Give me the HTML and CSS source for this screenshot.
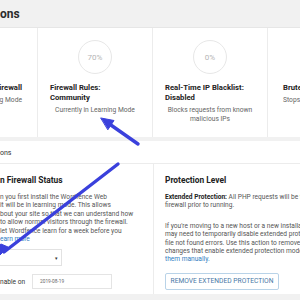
FILE: index.html
```html
<!DOCTYPE html>
<html>
<head>
<meta charset="utf-8">
<link rel="stylesheet" href="styles.css">
</head>
<body>
<div class="page">
  <header class="title-bar"><h1>ons</h1></header>

  <section class="status-cards">
    <div class="card card-first">
      <div class="ring ring-hidden"></div>
      <div class="card-title">Web Application Firewall</div>
      <div class="card-desc card-desc-right">Currently in Learning Mode</div>
    </div>
    <div class="card">
      <div class="ring">70%</div>
      <div class="card-title">Firewall Rules:<br>Community</div>
      <div class="card-desc">Currently in Learning Mode</div>
    </div>
    <div class="card">
      <div class="ring">0%</div>
      <div class="card-title">Real-Time IP Blacklist:<br>Disabled</div>
      <div class="card-desc">Blocks requests from known<br>malicious IPs</div>
    </div>
    <div class="card card-last">
      <div class="ring ring-hidden"></div>
      <div class="card-title">Brute Force Protection</div>
      <div class="card-desc card-desc-left">Stops password guessing</div>
    </div>
  </section>

  <section class="options">
    <div class="options-head">ons</div>
    <div class="options-body">
      <div class="col col-left">
        <h2 class="col-title">n Firewall Status</h2>
        <p class="text">n you first install the Wordfence Web<br>it will be in learning mode. This allows<br>bout your site so that we can understand how<br>to allow normal visitors through the firewall.<br>let Wordfence learn for a week before you<br><a class="link" href="#">earn more</a></p>
        <div class="select"><span class="caret">&#9662;</span></div>
        <div class="date-row">
          <span class="date-label">nable on</span>
          <span class="date-input">2019-08-19</span>
        </div>
      </div>
      <div class="col col-right">
        <h2 class="col-title">Protection Level</h2>
        <p class="text"><b>Extended Protection:</b> All PHP requests will be filtered by the<br>firewall prior to running.</p>
        <p class="text text-gap">If you're moving to a new host or a new installation, you<br>may need to temporarily disable extended protection to avoid<br>file not found errors. Use this action to remove the config<br>changes that enable extended protection mode or you can<br><a class="link" href="#">them manually.</a></p>
        <div class="button">REMOVE EXTENDED PROTECTION</div>
      </div>
    </div>
  </section>

  <svg class="arrows" width="300" height="300" viewBox="0 0 300 300">
    <g stroke="#3a40dc" stroke-width="3.4" stroke-linecap="round" fill="#3a40dc">
      <line x1="138" y1="144" x2="108" y2="123"/>
      <polygon points="101,118 114,120.5 108,129.5" stroke-width="1" stroke-linejoin="round"/>
      <line x1="118" y1="164" x2="4" y2="252"/>
      <polygon points="-4,259 8,247 1,244 -10,252" stroke-width="1" stroke-linejoin="round"/>
    </g>
  </svg>
</div>
</body>
</html>
```

FILE: styles.css
```css
html, body {
  margin: 0;
  padding: 0;
}
body {
  background: #f1f1f1;
  font-family: Roboto, "Liberation Sans", Arial, sans-serif;
  color: #333;
  overflow: hidden;
}
.page {
  position: relative;
  width: 300px;
  height: 300px;
  overflow: hidden;
}
.title-bar {
  height: 27px;
  background: #f1f1f1;
  border-bottom: 1px solid #e6e6e6;
}
.title-bar h1 {
  margin: 0;
  font-size: 12px;
  line-height: 29px;
  font-weight: 700;
  color: #2b2b2b;
}
.status-cards {
  display: flex;
  height: 109px;
  background: #fff;
  margin-left: -77px;
  width: 500px;
}
.card {
  width: 115px;
  flex: none;
  box-sizing: border-box;
  padding: 12px 12px 0;
  border-right: 1px solid #ececec;
}
.card-first {
  padding-left: 14px;
  padding-right: 15px;
}
.card-last {
  border-right: none;
  padding-left: 15px;
}
.ring {
  width: 32px;
  height: 32px;
  margin: 0 auto;
  border: 1.5px solid #e7e7e7;
  border-radius: 50%;
  display: flex;
  align-items: center;
  justify-content: center;
  font-size: 8px;
  color: #b5b5b5;
}
.ring-hidden {
  visibility: hidden;
}
.card-title {
  margin-top: 9px;
  font-size: 7.7px;
  line-height: 10px;
  font-weight: 700;
  color: #222;
  white-space: nowrap;
}
.card-desc {
  margin-top: 3px;
  font-size: 6.7px;
  line-height: 9px;
  color: #666;
  text-align: center;
  white-space: nowrap;
}
.card-desc-left {
  text-align: left;
}
.card-desc-right {
  text-align: right;
}
.options {
  margin-top: 4px;
  background: #fff;
  height: 153px;
}
.options-head {
  height: 22px;
  line-height: 24px;
  font-size: 7px;
  color: #333;
  border-bottom: 1px solid #ececec;
}
.options-body {
  display: flex;
  height: 130px;
}
.col {
  box-sizing: border-box;
  padding-top: 11px;
}
.col-left {
  width: 154px;
  flex: none;
  border-right: 1px solid #ececec;
}
.col-right {
  padding-left: 11px;
  flex: none;
  width: 230px;
}
.col-title {
  margin: 0;
  font-size: 8.4px;
  line-height: 11px;
  font-weight: 700;
  color: #222;
  white-space: nowrap;
}
.text {
  margin: 7px 0 0;
  font-size: 6.6px;
  line-height: 8.4px;
  color: #555;
  white-space: nowrap;
}
.text b {
  color: #222;
  font-weight: 700;
}
.text-gap {
  margin-top: 12px;
}
.link {
  color: #2f7dc1;
  text-decoration: none;
}
.select {
  margin-top: 6px;
  width: 62px;
  height: 17px;
  box-sizing: border-box;
  border: 1px solid #e2e2e2;
  border-left: none;
  display: flex;
  align-items: center;
  justify-content: flex-end;
  padding-right: 3px;
}
.caret {
  font-size: 5px;
  color: #333;
}
.date-row {
  margin-top: 8px;
  display: flex;
  align-items: center;
  gap: 5px;
}
.date-label {
  font-size: 6.6px;
  color: #333;
  width: 27px;
}
.date-input {
  width: 80px;
  height: 15px;
  box-sizing: border-box;
  border: 1px solid #e4e4e4;
  font-size: 4.8px;
  line-height: 13px;
  padding-left: 7px;
  color: #666;
}
.button {
  margin-top: 9px;
  width: 114px;
  height: 17px;
  box-sizing: border-box;
  border: 1px solid #b9d3e8;
  border-radius: 2px;
  font-size: 6.7px;
  line-height: 15px;
  text-align: center;
  color: #4a78a6;
  white-space: nowrap;
}
.arrows {
  position: absolute;
  left: 0;
  top: 0;
  overflow: visible;
}
```
